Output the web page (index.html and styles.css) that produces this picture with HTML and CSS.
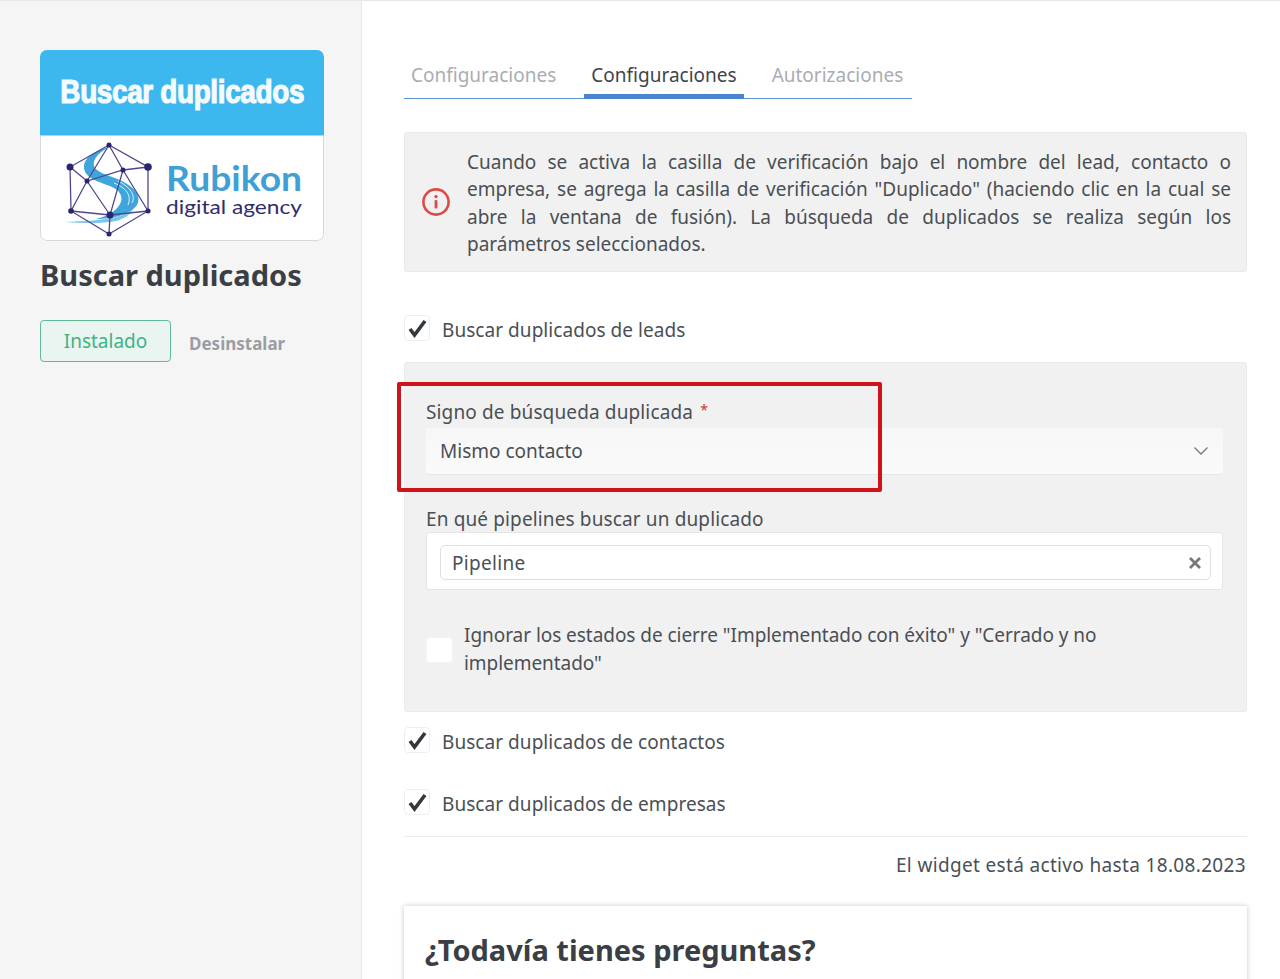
FILE: index.html
```html
<!DOCTYPE html>
<html lang="es">
<head>
<meta charset="utf-8">
<title>Buscar duplicados</title>
<link rel="stylesheet" href="styles.css">
</head>
<body>
<div class="page">
  <aside class="sidebar">
    <div class="logo">
      <div class="logo-top"><span class="logo-title">Buscar duplicados</span></div>
      <div class="logo-body">
      <svg class="logo-art" viewBox="0 5 284 105" width="284" height="105">
        <path d="M70 16C56 19 44 26 44 36C44 46 56 50 70 55C80 59 84 66 80 73C76 80 68 85 56 88C72 88 90 84 97 74C102 65 94 56 82 50C72 45 56 42 54 35C52 28 60 20 70 16Z" fill="#3fa6dd"/>
        <path d="M24 91C42 90 60 90 76 86C84 84 90 81 94 77C90 84 84 88 76 90C60 93 42 92 24 91Z" fill="#7cc5ea"/>
        <path d="M74 52C86 57 92 64 88 74M78 50C90 56 96 64 92 72" fill="none" stroke="#dff1fb" stroke-width="1"/>
        <g stroke="#4d4a8c" stroke-width="1.3" fill="none">
          <path d="M69 14L30 36L31 80L69 103L108 80L108 36Z"/>
          <path d="M30 36L47 50L83 39L108 36M69 14L47 50L31 80M69 14L83 39L70 84L69 103M47 50L70 84M83 39L108 80M31 80L70 84L108 80"/>
        </g>
        <g fill="#29256f">
          <circle cx="69" cy="14" r="2.5"/><circle cx="30" cy="36" r="3.5"/><circle cx="108" cy="36" r="3.8"/>
          <circle cx="47" cy="50" r="2.5"/><circle cx="83" cy="39" r="2.5"/><circle cx="31" cy="80" r="2.8"/>
          <circle cx="108" cy="80" r="2.5"/><circle cx="70" cy="84" r="3.5"/><circle cx="69" cy="103" r="2.5"/>
        </g>
        <text class="logo-brand" x="126" y="60" textLength="136" lengthAdjust="spacingAndGlyphs">Rubikon</text>
        <text class="logo-sub" x="126" y="83" textLength="136" lengthAdjust="spacingAndGlyphs">digital agency</text>
      </svg>
      </div>
    </div>
    <h1 class="app-title">Buscar duplicados</h1>
    <div class="actions">
      <span class="installed">Instalado</span>
      <span class="uninstall">Desinstalar</span>
    </div>
  </aside>

  <main class="content">
    <nav class="tabs">
      <span class="tab">Configuraciones</span>
      <span class="tab tab-active">Configuraciones</span>
      <span class="tab">Autorizaciones</span>
    </nav>

    <section class="notice">
      <svg class="notice-icon" viewBox="0 0 30 30" width="30" height="30">
        <circle cx="15" cy="15" r="12.6" fill="none" stroke="#dd4b45" stroke-width="2.6"/>
        <rect x="13.6" y="13" width="2.8" height="8.5" rx="1" fill="#dd4b45"/>
        <circle cx="15" cy="9.6" r="1.7" fill="#dd4b45"/>
      </svg>
      <p class="notice-text">Cuando se activa la casilla de verificación bajo el nombre del lead, contacto o empresa, se agrega la casilla de verificación "Duplicado" (haciendo clic en la cual se abre la ventana de fusión). La búsqueda de duplicados se realiza según los parámetros seleccionados.</p>
    </section>

    <label class="check check-leads">
      <span class="box"><svg viewBox="0 0 26 26" width="26" height="26"><path class="tick" d="M6 14L10.5 20L21 6"/></svg></span>
      <span class="check-label">Buscar duplicados de leads</span>
    </label>

    <section class="panel">
      <div class="field-label">Signo de búsqueda duplicada <span class="req">*</span></div>
      <div class="select">
        <span>Mismo contacto</span>
        <svg viewBox="0 0 16 10" width="16" height="10"><path d="M1.5 1.5L8 8L14.5 1.5" fill="none" stroke="#777" stroke-width="1.3"/></svg>
      </div>
      <div class="field-label field-label-2">En qué pipelines buscar un duplicado</div>
      <div class="multi">
        <div class="chip">
          <span class="chip-text">Pipeline</span>
          <svg viewBox="0 0 14 14" width="14" height="14"><path d="M2 2L12 12M12 2L2 12" stroke="#777" stroke-width="2.8"/></svg>
        </div>
      </div>
      <label class="ignore">
        <span class="box box-empty"></span>
        <span class="ignore-text">Ignorar los estados de cierre "Implementado con éxito" y "Cerrado y no implementado"</span>
      </label>
      <div class="highlight"></div>
    </section>

    <label class="check check-contacts">
      <span class="box"><svg viewBox="0 0 26 26" width="26" height="26"><path class="tick" d="M6 14L10.5 20L21 6"/></svg></span>
      <span class="check-label">Buscar duplicados de contactos</span>
    </label>
    <label class="check check-companies">
      <span class="box"><svg viewBox="0 0 26 26" width="26" height="26"><path class="tick" d="M6 14L10.5 20L21 6"/></svg></span>
      <span class="check-label">Buscar duplicados de empresas</span>
    </label>

    <div class="active-until">El widget está activo hasta 18.08.2023</div>

    <section class="card">
      <h2 class="card-title">¿Todavía tienes preguntas?</h2>
    </section>
  </main>
</div>
</body>
</html>
```

FILE: styles.css
```css
* { box-sizing: border-box; }
html, body { margin: 0; height: 979px; overflow: hidden; background: #fff; }
body { font-family: "Noto Sans", "Open Sans", sans-serif; font-size: 19px; color: #4a4f55; }
.page { display: flex; height: 979px; border-top: 1px solid #e6e6e6; }

.sidebar { flex: 0 0 362px; background: #f5f5f5; border-right: 1px solid #e9e9e9; padding: 49px 0 0 40px; }
.logo { width: 284px; height: 191px; border-radius: 7px; overflow: hidden; display: flex; flex-direction: column; }
.logo-top { flex: 0 0 86px; padding-bottom: 2px; background: #3db8ee; display: flex; align-items: center; justify-content: center; border-bottom: 1px solid #a9d8ee; }
.logo-title { display: inline-block; font-family: "Liberation Sans", sans-serif; font-weight: 700; font-size: 33px; color: #f4fbff; letter-spacing: -0.4px; white-space: nowrap; -webkit-text-stroke: 1.2px #f4fbff; transform: scaleX(.845); }
.logo-body { flex: 1; background: #fff; border: 1px solid #d9d9d9; border-top: 0; border-radius: 0 0 7px 7px; overflow: hidden; }
.logo-art { display: block; margin-left: -1px; }
.logo-brand { font-family: "Lato", sans-serif; font-weight: 700; font-size: 35px; fill: #3fa0d6; }
.logo-sub { font-family: "Lato", sans-serif; font-size: 19px; fill: #2f2c6d; }
.app-title { margin: 14px 0 0; font-size: 29px; line-height: 40px; font-weight: 700; color: #3a3f46; white-space: nowrap; }
.actions { display: flex; align-items: center; margin-top: 25px; }
.installed { width: 131px; height: 42px; display: flex; align-items: center; justify-content: center; border: 1px solid #5dbb95; border-radius: 4px; background: #eaf4f0; color: #3fb286; font-size: 19px; }
.uninstall { margin-left: 18px; margin-top: 5px; font-weight: 700; font-size: 17px; color: #9a9da3; }

.content { flex: 0 0 843px; margin-left: 42px; }
.tabs { display: flex; width: 508px; height: 47px; margin-top: 51px; border-bottom: 1px solid #5a93cf; }
.tab { height: 47px; padding: 0 7px 2px; margin-right: 21px; display: flex; align-items: center; color: #a9adb2; white-space: nowrap; }
.tab-active { color: #3f444b; border-bottom: 5px solid #4a86d0; padding-top: 6px; padding-bottom: 2px; }

.notice { display: flex; align-items: center; height: 140px; margin-top: 33px; background: #f1f1f1; border: 1px solid #e9e9e9; border-radius: 3px; padding: 3px 15px 0 16px; }
.notice-icon { flex: none; margin-top: -3px; }
.notice-text { margin: 0 0 0 16px; line-height: 27.5px; text-align: justify; }

.check { display: flex; align-items: center; gap: 12px; }
.check-label { line-height: 22px; margin-top: 4px; letter-spacing: .05px; }
.box { flex: none; width: 26px; height: 26px; background: #fff; border: 1px solid #eee; border-radius: 4px; position: relative; }
.box svg { position: absolute; left: -1px; top: -1px; }
.tick { fill: none; stroke: #33383f; stroke-width: 3.6; }
.check-leads { margin-top: 43px; }
.panel { position: relative; height: 350px; margin-top: 21px; padding: 35px 23px 0 21px; background: #f1f1f1; border: 1px solid #ebebeb; border-radius: 3px; }
.field-label { line-height: 24px; white-space: nowrap; letter-spacing: .13px; }
.req { color: #d8322e; font-size: 14px; vertical-align: 4px; margin-left: 2px; }
.select { display: flex; align-items: center; justify-content: space-between; height: 47px; margin-top: 4px; padding: 0 14px; background: linear-gradient(#f7f7f7, #fafafa); border-bottom: 1px solid #e6e6e6; border-radius: 3px; }
.field-label-2 { margin-top: 32px; }
.multi { height: 58px; margin-top: 1px; padding: 12px 11px 0 13px; background: #fff; border: 1px solid #e4e4e4; border-radius: 3px; }
.chip { display: flex; align-items: center; justify-content: space-between; height: 35px; padding: 0 8px 0 11px; border: 1px solid #dfdfdf; border-radius: 5px; }
.chip-text { letter-spacing: .3px; }
.ignore { display: flex; align-items: center; gap: 11px; margin-top: 31px; }
.ignore-text { line-height: 28px; width: 700px; letter-spacing: -.05px; }
.box-empty { width: 27px; border-color: #f3f3f3; margin-top: 2px; }
.highlight { position: absolute; left: -8px; top: 19px; width: 485px; height: 110px; border: 4px solid #d0121b; border-radius: 2px; pointer-events: none; }

.check-contacts { margin-top: 15px; }
.check-companies { margin-top: 36px; padding-bottom: 21px; border-bottom: 1px solid #ececec; }
.active-until { margin-top: 15px; text-align: right; line-height: 26px; padding-right: 1px; letter-spacing: .34px; }
.card { margin-top: 28px; height: 120px; padding: 23px 21px; background: #fff; box-shadow: 0 0 5px rgba(0,0,0,.22); }
.card-title { margin: 0; font-size: 29px; line-height: 42px; font-weight: 700; color: #3a3f46; white-space: nowrap; }
```
